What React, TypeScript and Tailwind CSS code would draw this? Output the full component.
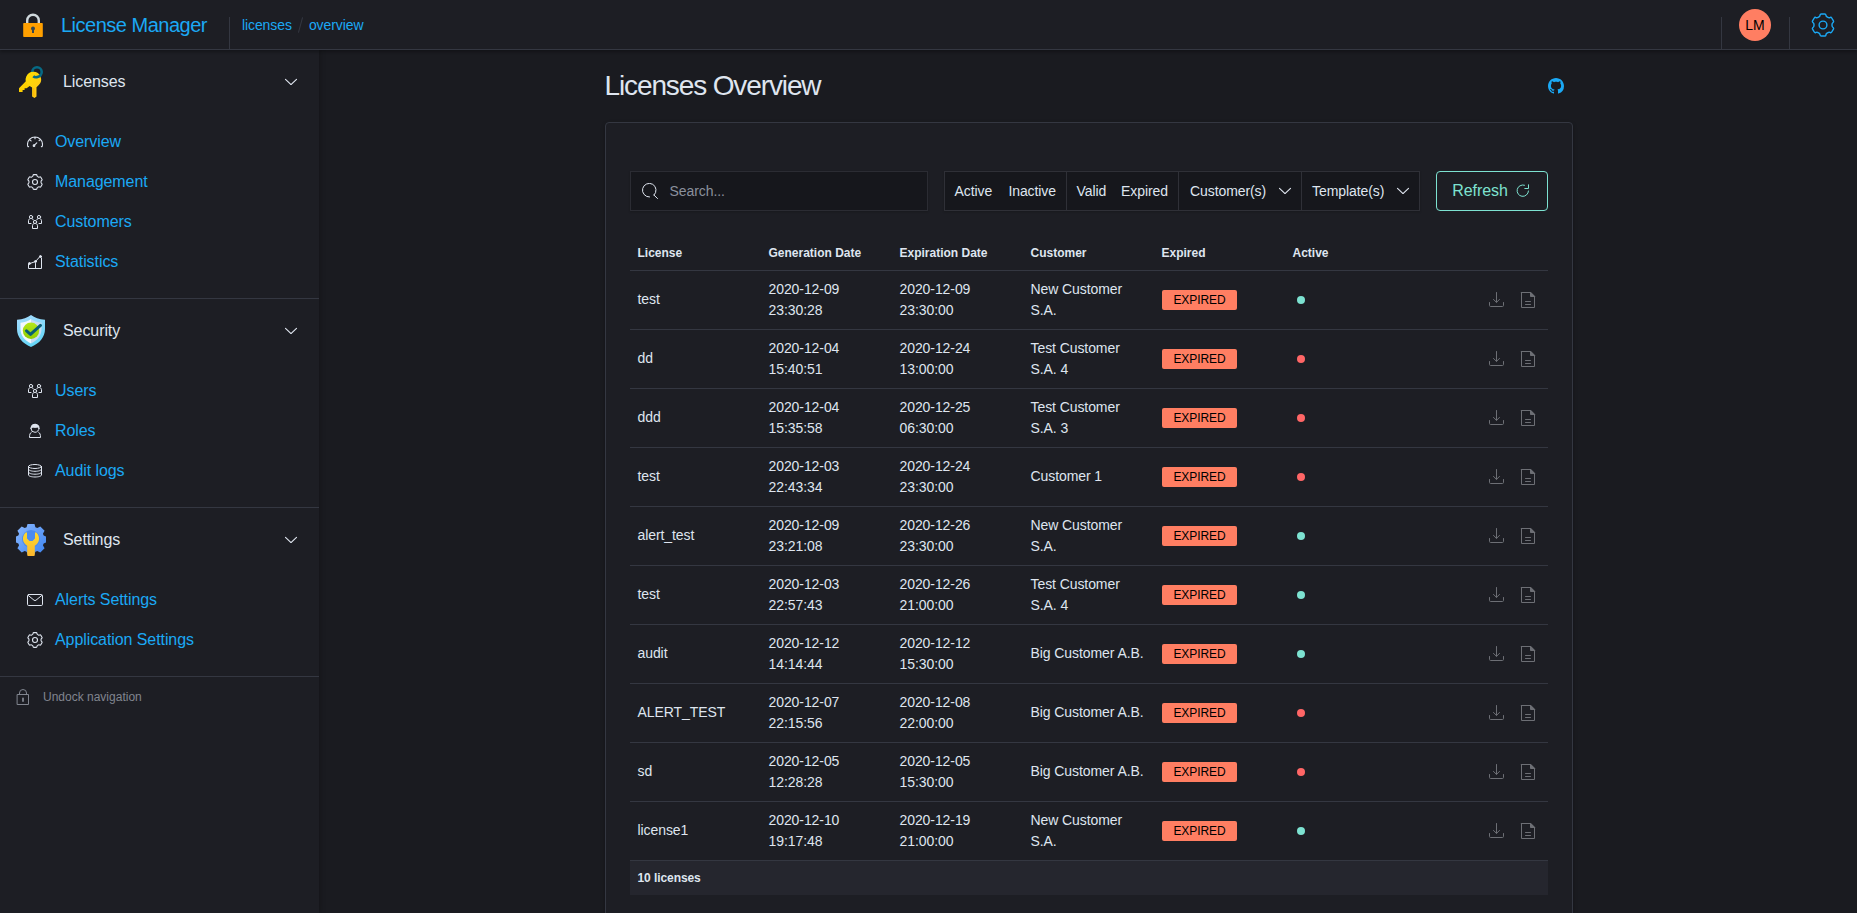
import React from "react";

type IconProps = { className?: string };

/** Closed outline of a six-toothed cog centred in a 16x16 box, with softened corners. */
function cogPath(outer: number, inner: number, outerHalf: number, innerHalf: number, soften: number) {
  const pts: [number, number][] = [];
  for (let tooth = 0; tooth < 6; tooth++) {
    const corners: [number, number][] = [
      [inner, -innerHalf],
      [outer, -outerHalf],
      [outer, outerHalf],
      [inner, innerHalf],
    ];
    corners.forEach(([r, deg]) => {
      const a = ((tooth * 60 + deg) * Math.PI) / 180;
      pts.push([8 + r * Math.sin(a), 8 - r * Math.cos(a)]);
    });
  }
  const toward = (a: [number, number], b: [number, number]) => {
    const len = Math.hypot(b[0] - a[0], b[1] - a[1]);
    const t = Math.min(0.5, soften / len);
    return `${(a[0] + (b[0] - a[0]) * t).toFixed(2)} ${(a[1] + (b[1] - a[1]) * t).toFixed(2)}`;
  };
  return (
    pts
      .map((p, i) => {
        const prev = pts[(i + pts.length - 1) % pts.length];
        const next = pts[(i + 1) % pts.length];
        return `${i === 0 ? "M" : "L"}${toward(p, prev)}Q${p[0].toFixed(2)} ${p[1].toFixed(2)} ${toward(p, next)}`;
      })
      .join("") + "Z"
  );
}

const GEAR = cogPath(7.6, 6.1, 14, 20, 0.7);

const svgProps = {
  viewBox: "0 0 16 16",
  fill: "none",
  stroke: "currentColor",
  strokeLinecap: "round" as const,
  strokeLinejoin: "round" as const,
};

const GearIcon = ({ className = "size-4" }: IconProps) => (
  <svg {...svgProps} strokeWidth="1.1" className={className}>
    <path d={GEAR} />
    <circle cx="8" cy="8" r="2.5" />
  </svg>
);

const BigGearIcon = () => (
  <svg {...svgProps} strokeWidth="0.95" className="size-6">
    <path d={GEAR} />
    <circle cx="8" cy="8" r="2.6" />
  </svg>
);

const DashboardIcon = () => (
  <svg {...svgProps} strokeWidth="1.1" className="size-4">
    <path d="M1.600 12.600H.9C.6 11.800.5 11.200.5 10.500a7.500 7.500 0 0 1 15 0c0 .7-.1 1.400-.4 2.100h-.7M8 3.200v1.600M3.200 6.100l.9.800M12.700 6.100l-.6.600M6.900 11.700l2.900-2.900" />
    <circle cx="7" cy="11.700" r=".8" />
  </svg>
);

const UsersIcon = () => (
  <svg {...svgProps} className="size-4">
    <circle cx="4" cy="3" r="1.600" />
    <circle cx="12" cy="3" r="1.600" />
    <circle cx="8" cy="8" r="1.600" />
    <path d="M2.800 4.700C1.800 5.200 1.500 6 1.500 7v2.500H4M5.200 4.700c.7.300 1 .7 1.200 1.200M13.200 4.700c1 .5 1.300 1.300 1.300 2.300v2.500H12M10.800 4.700c-.7.300-1 .7-1.200 1.200M6.800 9.600c-1 .5-1.300 1.200-1.300 2.200v2.700h5v-2.700c0-1-.3-1.700-1.300-2.200" />
  </svg>
);

const StatsIcon = () => (
  <svg {...svgProps} className="size-4">
    <path d="M1.500 10v4.500h13V4M8.500 9.500v5M3 9.500l5.500-2 4.500-5" />
    <circle cx="2.500" cy="9.500" r="1" fill="currentColor" />
    <circle cx="8.500" cy="7.500" r="1" fill="currentColor" />
    <circle cx="13.500" cy="2.500" r="1" fill="currentColor" />
  </svg>
);

const UserIcon = () => (
  <svg {...svgProps} className="size-4">
    <circle cx="8" cy="5.300" r="4" />
    <path d="M4 5.300C4 2.600 5.800 1.300 8 1.300s4 1.200 4 3c-1.500-.6-3 .5-4.500.2C6 4.200 5 4.300 4 5.300z" fill="currentColor" />
    <path d="M4.300 9.300C3 10 2.500 11.500 2.500 14.500h11c0-3-.5-4.500-1.800-5.200" />
  </svg>
);

const StorageIcon = () => (
  <svg {...svgProps} className="size-4">
    <ellipse cx="8" cy="3.500" rx="6.500" ry="2" />
    <path d="M1.500 3.500v8.500c0 1.100 2.900 2 6.500 2s6.500-.9 6.500-2V3.500M1.500 6.300c0 1.100 2.900 2 6.500 2s6.500-.9 6.500-2M1.500 9.200c0 1.100 2.900 2 6.500 2s6.500-.9 6.500-2" />
  </svg>
);

const EmailIcon = () => (
  <svg {...svgProps} className="size-4">
    <rect x=".5" y="2.500" width="15" height="11" rx="1.200" />
    <path d="M1.300 3.500 7 8.200q1 .8 2 0l5.700-4.700" />
  </svg>
);

const LockIcon = () => (
  <svg {...svgProps} className="size-4" strokeLinejoin="miter">
    <path d="M2.500 5.500h11v10h-11zM4.500 5.500V4a3.500 3.500 0 0 1 7 0v1.500" />
    <path d="M8 9.500v2.500" strokeWidth="1.800" />
  </svg>
);

const ChevronIcon = () => (
  <svg {...svgProps} strokeWidth="1.15" className="size-4">
    <path d="M2.500 5.300 7.500 10.200q.5.400 1 0l5-4.900" />
  </svg>
);

const SearchIcon = () => (
  <svg {...svgProps} className="size-4">
    <path d="M7.500 14A6.800 6.800 0 1 1 12 12.100M12 12.100l3.500 3.400" />
  </svg>
);

const RefreshIcon = () => (
  <svg {...svgProps} className="size-4">
    <path d="M9.500 2.200A5.700 5.700 0 1 0 13.500 8M13.500 1.800v3.700H9.800" />
  </svg>
);

const DownloadIcon = () => (
  <svg {...svgProps} className="size-4">
    <path d="M8.500.5v9.800M5.500 7.400l3 3 3-3M1.500 10.500v2.900q0 1.100 1.100 1.100h11.800q1.100 0 1.100-1.100v-2.900" />
  </svg>
);

const DocumentIcon = () => (
  <svg {...svgProps} className="size-4">
    <path d="M1.500.5h9l4 4v11h-13V.5zM5.500 9.500h5M5.500 12.500h5" />
    <path d="M10.500.5v4h4z" fill="currentColor" />
  </svg>
);

const GithubIcon = () => (
  <svg viewBox="0 0 16 16" className="size-4" fill="currentColor">
    <path d="M8 0C3.580 0 0 3.580 0 8c0 3.540 2.290 6.530 5.470 7.590.4.070.55-.17.55-.38 0-.19-.01-.82-.01-1.490-2.010.37-2.530-.49-2.690-.94-.09-.23-.48-.94-.82-1.130-.28-.15-.68-.52-.01-.53.63-.01 1.080.58 1.230.82.72 1.210 1.870.87 2.330.66.070-.52.28-.87.51-1.070-1.780-.2-3.640-.89-3.640-3.950 0-.87.31-1.590.82-2.150-.08-.2-.36-1.020.08-2.120 0 0 .67-.21 2.200.82.64-.18 1.320-.27 2-.27s1.360.09 2 .27c1.530-1.040 2.200-.82 2.200-.82.44 1.100.16 1.920.08 2.120.51.56.82 1.270.82 2.150 0 3.070-1.870 3.750-3.650 3.950.29.25.54.73.54 1.480 0 1.070-.01 1.930-.01 2.200 0 .21.15.46.55.38A8.010 8.010 0 0 0 16 8c0-4.420-3.580-8-8-8z" />
  </svg>
);

const PadlockLogo = () => (
  <svg viewBox="0 0 24 24" className="size-6">
    <path d="M6.200 10V7.500a5.800 5.800 0 0 1 11.600 0V10" fill="none" stroke="#cfd8dc" strokeWidth="2.400" />
    <rect x="2.200" y="10" width="19.600" height="14" rx=".8" fill="#ffa000" />
    <circle cx="12" cy="15.500" r="2" fill="#37474f" />
    <path d="M11 16h2v4h-2z" fill="#37474f" />
  </svg>
);

const KeysLogo = () => (
  <svg viewBox="0 0 32 32" className="size-8">
    <defs>
      <linearGradient id="keyGold" x1="0" y1="0" x2="1" y2="1">
        <stop offset="0" stopColor="#fede00" />
        <stop offset="1" stopColor="#ffc41a" />
      </linearGradient>
    </defs>
    <circle cx="22" cy="6" r="4.700" fill="none" stroke="#066a85" strokeWidth="2.600" />
    <path d="M12.500 13.500 4 22.300v3.600h3.600v-1.800h2v-1.900h2L17.500 18z" fill="#fdd000" />
    <path d="M18.500 5.800a7.700 7.700 0 0 1 5.300 13.200l-2.300 2.200v9.300l-2 1.500-2.400-1.500V21.500l-4.100-2.500a7.700 7.700 0 0 1 5.500-13.200z" fill="url(#keyGold)" />
    <path d="M18.800 22v8" stroke="#ffab00" strokeWidth=".8" />
    <path d="M18.300 10.300c1.500 1.400 5.700 1.200 7.500-1.300" stroke="#066a85" strokeWidth="2.600" fill="none" />
  </svg>
);

const ShieldLogo = () => (
  <svg viewBox="0 0 32 32" className="size-8">
    <defs>
      <linearGradient id="shieldEdge" x1="0" y1="0" x2=".4" y2="1">
        <stop offset="0" stopColor="#a9dcff" />
        <stop offset="1" stopColor="#66d6f7" />
      </linearGradient>
      <linearGradient id="shieldFace" x1="0" y1="0" x2="1" y2="0">
        <stop offset=".5" stopColor="#f3f8ff" />
        <stop offset=".5" stopColor="#c9dcf3" />
      </linearGradient>
      <linearGradient id="shieldDisc" x1="0" y1="0" x2="0" y2="1">
        <stop offset="0" stopColor="#b5e61d" />
        <stop offset="1" stopColor="#8fce00" />
      </linearGradient>
    </defs>
    <path d="M16 0c3.600 2.600 8 4.300 14 4.700V14c0 8-5.500 14.500-14 18C7.500 28.500 2 22 2 14V4.700C8 4.300 12.400 2.600 16 0z" fill="url(#shieldEdge)" />
    <path d="M16 4c3 2.100 6.200 3.200 10.500 3.800V14c0 6.500-4 11.300-10.500 14.500C9.500 25.300 5.500 20.500 5.500 14V7.800C9.800 7.200 13 6.100 16 4z" fill="url(#shieldFace)" />
    <circle cx="16" cy="15.800" r="8.200" fill="url(#shieldDisc)" />
    <path d="m11.500 15.800 4 3.600 10-9" fill="none" stroke="#075e75" strokeWidth="3" strokeLinecap="round" strokeLinejoin="round" />
  </svg>
);

const SettingsLogo = () => (
  <svg viewBox="0 0 32 32" className="size-8">
    <defs>
      <linearGradient id="cogBlue" x1="0" y1="0" x2="1" y2="1">
        <stop offset="0" stopColor="#8ab8ff" />
        <stop offset="1" stopColor="#3d84f0" />
      </linearGradient>
      <linearGradient id="wrenchGold" x1="0" y1="0" x2="0" y2="1">
        <stop offset="0" stopColor="#ffda2d" />
        <stop offset="1" stopColor="#fbb62d" />
      </linearGradient>
    </defs>
    <path
      d="M12.500 0h7l.9 3.300 1.900.8 3-1.700 4.300 4.300-1.700 3 .8 1.900 2.300.9v6l-2.300.9-.8 1.900 1.700 3-4.300 4.300-3-1.700-1.900.8-.9 2.300h-7l-.9-2.300-1.900-.8-3 1.700-4.300-4.300 1.700-3-.8-1.900L1 18.500v-6l2.300-.9.8-1.900-1.700-3 4.300-4.300 3 1.700 1.900-.8z"
      fill="url(#cogBlue)"
    />
    <circle cx="16" cy="15" r="9" fill="#4a8bf0" />
    <path d="M11 8.200a8.200 8.200 0 0 0 1.200 13.600V31q0 1 1 1h5.600q1 0 1-1v-9.200A8.200 8.200 0 0 0 21 8.200l-1 .6v5.700L17.500 17h-3L12 14.500V8.800z" fill="url(#wrenchGold)" />
  </svg>
);

type NavItem = { label: string; icon: React.ReactNode };
type NavGroup = { title: string; logo: React.ReactNode; items: NavItem[] };

const navGroups: NavGroup[] = [
  {
    title: "Licenses",
    logo: <KeysLogo />,
    items: [
      { label: "Overview", icon: <DashboardIcon /> },
      { label: "Management", icon: <GearIcon /> },
      { label: "Customers", icon: <UsersIcon /> },
      { label: "Statistics", icon: <StatsIcon /> },
    ],
  },
  {
    title: "Security",
    logo: <ShieldLogo />,
    items: [
      { label: "Users", icon: <UsersIcon /> },
      { label: "Roles", icon: <UserIcon /> },
      { label: "Audit logs", icon: <StorageIcon /> },
    ],
  },
  {
    title: "Settings",
    logo: <SettingsLogo />,
    items: [
      { label: "Alerts Settings", icon: <EmailIcon /> },
      { label: "Application Settings", icon: <GearIcon /> },
    ],
  },
];

type License = {
  name: string;
  generated: string;
  expires: string;
  customer: string;
  active: boolean;
};

const licenses: License[] = [
  { name: "test", generated: "2020-12-09 23:30:28", expires: "2020-12-09 23:30:00", customer: "New Customer S.A.", active: true },
  { name: "dd", generated: "2020-12-04 15:40:51", expires: "2020-12-24 13:00:00", customer: "Test Customer S.A. 4", active: false },
  { name: "ddd", generated: "2020-12-04 15:35:58", expires: "2020-12-25 06:30:00", customer: "Test Customer S.A. 3", active: false },
  { name: "test", generated: "2020-12-03 22:43:34", expires: "2020-12-24 23:30:00", customer: "Customer 1", active: false },
  { name: "alert_test", generated: "2020-12-09 23:21:08", expires: "2020-12-26 23:30:00", customer: "New Customer S.A.", active: true },
  { name: "test", generated: "2020-12-03 22:57:43", expires: "2020-12-26 21:00:00", customer: "Test Customer S.A. 4", active: true },
  { name: "audit", generated: "2020-12-12 14:14:44", expires: "2020-12-12 15:30:00", customer: "Big Customer A.B.", active: true },
  { name: "ALERT_TEST", generated: "2020-12-07 22:15:56", expires: "2020-12-08 22:00:00", customer: "Big Customer A.B.", active: false },
  { name: "sd", generated: "2020-12-05 12:28:28", expires: "2020-12-05 15:30:00", customer: "Big Customer A.B.", active: false },
  { name: "license1", generated: "2020-12-10 19:17:48", expires: "2020-12-19 21:00:00", customer: "New Customer S.A.", active: true },
];

const Header = () => (
  <header className="relative z-10 flex h-[50px] shrink-0 items-end border-b border-[#343741] bg-[#1d1e24] shadow-[0_2px_3px_rgba(0,0,0,0.3)]">
    <a className="flex h-12 items-center pl-[21px]">
      <PadlockLogo />
      <span className="pl-4 text-[20px] leading-6 tracking-[-0.5px] text-[#1ba9f5]">License Manager</span>
    </a>
    <div className="ml-[22px] h-8 w-px bg-[#343741]" />
    <nav className="flex h-[49px] items-center pl-3 text-sm text-[#1ba9f5]">
      <a>licenses</a>
      <span className="mx-2 h-4 w-px rotate-[15deg] bg-[#343741]" />
      <a>overview</a>
    </nav>
    <div className="ml-auto h-8 w-px bg-[#343741]" />
    <div className="flex h-12 items-center px-[17px]">
      <span className="flex size-8 items-center justify-center rounded-full bg-[#ff7e62] text-[14px] text-black">LM</span>
    </div>
    <div className="ml-px h-8 w-px bg-[#343741]" />
    <div className="flex h-12 items-center pr-[22px] pl-[21px] text-[#1ba9f5]">
      <BigGearIcon />
    </div>
  </header>
);

const Sidebar = () => (
  <aside className="relative w-[319px] shrink-0 bg-[#1d1e24] shadow-[0_0_6px_rgba(0,0,0,0.35)]">
    {navGroups.map((group) => (
      <section key={group.title} className="border-b border-[#343741]">
        <div className="flex h-16 items-center pr-5 pl-[15px]">
          {group.logo}
          <h3 className="flex-1 pl-4 text-base">{group.title}</h3>
          <ChevronIcon />
        </div>
        <ul className="pt-2 pb-4">
          {group.items.map((item) => (
            <li key={item.label} className="flex h-10 items-center pl-[27px]">
              {item.icon}
              <a className="pl-3 text-base text-[#1ba9f5]">{item.label}</a>
            </li>
          ))}
        </ul>
      </section>
    ))}
    <button className="flex h-10 items-center gap-3 pl-[15px] text-xs tracking-normal text-[#81858f]">
      <LockIcon />
      <span>Undock navigation</span>
    </button>
  </aside>
);

const Toolbar = () => (
  <div className="flex h-10 gap-4 text-sm">
    <div className="flex w-[298px] items-center gap-3 border border-[#2b2c33] bg-[#16171c] pl-[11px] text-[#8a909c] shadow-[0_1px_2px_rgba(0,0,0,0.2)]">
      <span className="text-[#dfe5ef]"><SearchIcon /></span>
      <span>Search...</span>
    </div>
    <div className="flex w-[476px] items-center border border-[#2f3037] bg-[#16171c] shadow-[0_1px_2px_rgba(0,0,0,0.2)]">
      <div className="flex h-full w-[122px] items-center justify-between border-r border-[#2f3037] pr-[9.5px] pl-[10px]">
        <span>Active</span>
        <span>Inactive</span>
      </div>
      <div className="flex h-full w-[112px] items-center justify-between border-r border-[#2f3037] pr-[9.5px] pl-[10px]">
        <span>Valid</span>
        <span>Expired</span>
      </div>
      <div className="flex h-full w-[123px] items-center justify-between border-r border-[#2f3037] pr-2 pl-[11.5px]">
        <span>Customer(s)</span>
        <ChevronIcon />
      </div>
      <div className="flex h-full flex-1 items-center justify-between pr-2 pl-[10.5px]">
        <span>Template(s)</span>
        <ChevronIcon />
      </div>
    </div>
    <button className="flex w-[112px] items-center justify-center gap-[7px] rounded border border-[#7de2d1] text-base text-[#7de2d1]">
      Refresh
      <RefreshIcon />
    </button>
  </div>
);

const headings = ["License", "Generation Date", "Expiration Date", "Customer", "Expired", "Active", ""];

const LicenseTable = () => (
  <div className="mt-6">
    <div className="grid h-9 grid-cols-[repeat(6,131px)_1fr] items-center border-b border-[#343741] text-xs font-bold tracking-normal">
      {headings.map((h) => (
        <span key={h} className="pl-2">{h}</span>
      ))}
    </div>
    {licenses.map((row, i) => (
      <div key={i} className="grid h-[59px] grid-cols-[repeat(6,131px)_1fr] items-center border-b border-[#343741] text-sm leading-[21px]">
        <span className="pb-px pl-2">{row.name}</span>
        <span className="pr-8 pl-2">{row.generated}</span>
        <span className="pr-8 pl-2">{row.expires}</span>
        <span className="pr-2 pb-px pl-2">{row.customer}</span>
        <span className="flex pl-[8.5px]">
          <span className="flex h-5 w-[75px] items-center justify-center rounded-xs bg-[#ff7e62] text-xs text-black">EXPIRED</span>
        </span>
        <span className="pl-[12.5px]">
          <span className={row.active ? "block size-2 rounded-full bg-[#7de2d1]" : "block size-2 rounded-full bg-[#ff6666]"} />
        </span>
        <span className="flex justify-end gap-4 pr-[11.5px] text-[#6d6f75]">
          <DownloadIcon />
          <DocumentIcon />
        </span>
      </div>
    ))}
    <div className="flex h-[34px] items-center bg-[#25262e] pl-2 text-xs font-bold">10 licenses</div>
  </div>
);

export default function App() {
  return (
    <div className="flex h-[913px] flex-col overflow-hidden bg-[#1a1b20] font-['Liberation_Sans',Arial,sans-serif] tracking-[-0.08px] text-[#dfe5ef]">
      <Header />
      <div className="flex min-h-0 flex-1">
        <Sidebar />
        <main className="flex-1 pl-[285.5px]">
          <div className="flex h-[72px] w-[968px] items-center justify-between pr-[8.5px]">
            <h1 className="text-[28px] leading-8 tracking-[-1.120px]">Licenses Overview</h1>
            <span className="text-[#1ba9f5]"><GithubIcon /></span>
          </div>
          <div className="h-[900px] w-[968px] rounded border border-[#343741] bg-[#1d1e24] px-6 pt-12 shadow-[0_2px_4px_rgba(0,0,0,0.3)]">
            <Toolbar />
            <LicenseTable />
          </div>
        </main>
      </div>
    </div>
  );
}
